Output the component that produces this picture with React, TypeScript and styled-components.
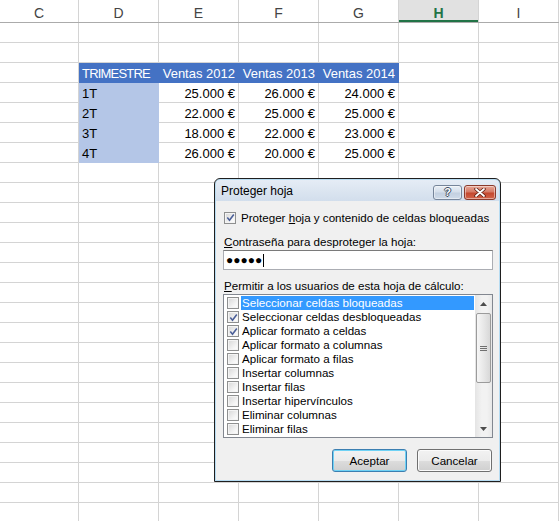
import styled, { createGlobalStyle } from 'styled-components';

const GlobalStyle = createGlobalStyle`
  html, body {
    margin: 0;
    padding: 0;
    background: #ffffff;
  }
  body {
    width: 559px;
    height: 521px;
    overflow: hidden;
  }
`;

const GRID = '#d4d4d4';
const BLUE = '#4472c4';
const LIGHT_BLUE = '#b4c6e7';

const columns = [
  { name: 'C', w: 79 },
  { name: 'D', w: 80 },
  { name: 'E', w: 80 },
  { name: 'F', w: 80 },
  { name: 'G', w: 80 },
  { name: 'H', w: 80, active: true },
  { name: 'I', w: 80 },
];

const table = [
  ['TRIMESTRE', 'Ventas 2012', 'Ventas 2013', 'Ventas 2014'],
  ['1T', '25.000 €', '26.000 €', '24.000 €'],
  ['2T', '22.000 €', '25.000 €', '25.000 €'],
  ['3T', '18.000 €', '22.000 €', '23.000 €'],
  ['4T', '26.000 €', '20.000 €', '25.000 €'],
];

const TABLE_ROW = 2;
const TABLE_COL = 1;
const ROW_COUNT = 25;

const permissions = [
  { label: 'Seleccionar celdas bloqueadas', checked: false, selected: true },
  { label: 'Seleccionar celdas desbloqueadas', checked: true },
  { label: 'Aplicar formato a celdas', checked: true },
  { label: 'Aplicar formato a columnas', checked: false },
  { label: 'Aplicar formato a filas', checked: false },
  { label: 'Insertar columnas', checked: false },
  { label: 'Insertar filas', checked: false },
  { label: 'Insertar hipervínculos', checked: false },
  { label: 'Eliminar columnas', checked: false },
  { label: 'Eliminar filas', checked: false },
];

/* ---------- sheet ---------- */

const Sheet = styled.div`
  position: relative;
  width: 559px;
  height: 521px;
  overflow: hidden;
  background: #ffffff;
  font-family: 'Liberation Sans', Arial, sans-serif;
`;

const HeaderRow = styled.div`
  display: flex;
  height: 23px;
  box-sizing: border-box;
  border-bottom: 1px solid #ababab;
`;

const ColHeader = styled.div<{ $w: number; $active?: boolean }>`
  flex: 0 0 ${({ $w }) => $w}px;
  box-sizing: border-box;
  display: flex;
  align-items: center;
  justify-content: center;
  padding-top: 3px;
  border-right: 1px solid ${GRID};
  font-size: 14px;
  color: ${({ $active }) => ($active ? '#217346' : '#444444')};
  font-weight: ${({ $active }) => ($active ? 700 : 400)};
  background: ${({ $active }) => ($active ? '#e1e1e1' : '#ffffff')};
  box-shadow: ${({ $active }) => ($active ? 'inset 0 -2px 0 #217346' : 'none')};
`;

const GridRow = styled.div`
  display: flex;
  height: 20px;
`;

const Cell = styled.div<{
  $w: number;
  $fill?: string;
  $right?: boolean;
  $light?: boolean;
  $caps?: boolean;
}>`
  flex: 0 0 ${({ $w }) => $w}px;
  box-sizing: border-box;
  display: flex;
  align-items: flex-end;
  justify-content: ${({ $right }) => ($right ? 'flex-end' : 'flex-start')};
  padding: 0 3px 1px 3px;
  border-right: 1px solid ${({ $fill }) => $fill ?? GRID};
  border-bottom: 1px solid ${({ $fill }) => $fill ?? GRID};
  background: ${({ $fill }) => $fill ?? '#ffffff'};
  color: ${({ $light }) => ($light ? '#ffffff' : '#000000')};
  font-size: 13px;
  line-height: 15px;
  letter-spacing: ${({ $caps }) => ($caps ? '-0.8px' : 'normal')};
  white-space: nowrap;
`;

/* ---------- dialog ---------- */

const Dialog = styled.div`
  position: absolute;
  left: 214px;
  top: 178px;
  width: 287px;
  height: 304px;
  box-sizing: border-box;
  display: flex;
  flex-direction: column;
  border: 1px solid #1f1f1f;
  border-radius: 6px 6px 0 0;
  background: linear-gradient(#e6edf6, #d2deec 22px, #c9dbec);
  box-shadow: inset 0 0 0 1px #b7dcf2;
  font-family: 'Liberation Sans', Arial, sans-serif;
  font-size: 11.6px;
  color: #000000;
`;

const TitleBar = styled.div`
  height: 22px;
  display: flex;
  align-items: center;
  padding: 0 4px 0 6px;
`;

const Title = styled.span`
  flex: 1;
  font-size: 12px;
  padding-top: 2px;
`;

const CaptionButtons = styled.div`
  display: flex;
  gap: 2px;
  align-self: flex-end;
  margin-bottom: 1px;
`;

const CaptionButton = styled.div<{ $close?: boolean }>`
  width: ${({ $close }) => ($close ? 32 : 29)}px;
  height: 15px;
  box-sizing: border-box;
  display: flex;
  align-items: center;
  justify-content: center;
  border: 1px solid ${({ $close }) => ($close ? '#8a3a2c' : '#76859a')};
  border-radius: 3px;
  background: ${({ $close }) =>
    $close
      ? 'linear-gradient(#e7a797, #d57a66 45%, #c4482f 55%, #d2644b)'
      : 'linear-gradient(#e9eff6, #d5dfeb 45%, #c3d0e0 55%, #cfdbe9)'};
  box-shadow: inset 0 0 0 1px rgba(255, 255, 255, 0.45);
`;

const HelpGlyph = styled.span`
  font-size: 11px;
  font-weight: 700;
  line-height: 11px;
  color: #ffffff;
  text-shadow: 1px 0 0 #3d4b5f, -1px 0 0 #3d4b5f, 0 1px 0 #3d4b5f, 0 -1px 0 #3d4b5f;
`;

const Body = styled.div`
  flex: 1;
  margin: 0 1px 1px;
  background: #f0f0f0;
  padding: 0 6px 0 7px;
  display: flex;
  flex-direction: column;
`;

const CheckRow = styled.div`
  margin-top: 9px;
  height: 15px;
  display: flex;
  align-items: center;
  padding-left: 1px;
  gap: 5px;
  white-space: nowrap;
`;

const Label = styled.div<{ $gap: number }>`
  margin-top: ${({ $gap }) => $gap}px;
  height: 15px;
  line-height: 15px;
  padding-left: 1px;
  white-space: nowrap;
`;

const Key = styled.span`
  text-decoration: underline;
`;

const PasswordInput = styled.div`
  margin-top: 1px;
  height: 20px;
  box-sizing: border-box;
  display: flex;
  align-items: center;
  padding-left: 2px;
  border: 1px solid #abadb3;
  border-top-color: #7a7a7a;
  background: #ffffff;
`;

const Dots = styled.span`
  font-family: 'Liberation Sans', 'DejaVu Sans', sans-serif;
  font-size: 12px;
  line-height: 14px;
`;

const Caret = styled.span`
  width: 1px;
  height: 13px;
  margin-left: 1px;
  background: #000000;
`;

const ListBox = styled.div`
  margin-top: 1px;
  height: 144px;
  box-sizing: border-box;
  display: flex;
  border: 1px solid #828790;
  background: #ffffff;
`;

const Items = styled.div`
  flex: 1;
  display: flex;
  flex-direction: column;
  padding: 1px 1px 1px 3px;
`;

const Item = styled.div`
  height: 14px;
  display: flex;
  align-items: center;
  white-space: nowrap;
`;

const ItemLabel = styled.span<{ $selected?: boolean }>`
  flex: 1;
  height: 14px;
  line-height: 14px;
  margin-left: 2px;
  padding-left: 1px;
  background: ${({ $selected }) => ($selected ? '#3399ff' : 'transparent')};
  color: ${({ $selected }) => ($selected ? '#ffffff' : '#000000')};
`;

const Box = styled.span`
  flex: 0 0 12px;
  width: 12px;
  height: 12px;
  box-sizing: border-box;
  display: flex;
  align-items: center;
  justify-content: center;
  border: 1px solid #8e8f8f;
  background: linear-gradient(135deg, #d6d6d6, #f6f6f6 70%, #ffffff);
  box-shadow: inset 0 0 0 1px #f4f4f4;
`;

const ScrollBar = styled.div`
  width: 17px;
  display: flex;
  flex-direction: column;
  background: linear-gradient(90deg, #e4e4e4, #f2f2f2 40%, #f2f2f2 70%, #e8e8e8);
`;

const ScrollArrow = styled.div`
  height: 17px;
  display: flex;
  align-items: center;
  justify-content: center;
`;

const ScrollTrack = styled.div`
  flex: 1;
  padding-top: 1px;
`;

const Thumb = styled.div`
  height: 70px;
  margin: 0 1px;
  box-sizing: border-box;
  display: flex;
  flex-direction: column;
  align-items: center;
  justify-content: center;
  gap: 1px;
  border: 1px solid #9b9b9b;
  border-radius: 2px;
  background: linear-gradient(90deg, #f6f6f6, #e8e8e8 50%, #d8d8d8);
`;

const Grip = styled.span`
  width: 7px;
  height: 1px;
  background: #707070;
`;

const ButtonRow = styled.div`
  margin-top: 11px;
  display: flex;
  justify-content: flex-end;
  gap: 10px;
  padding-right: 1px;
`;

const Button = styled.button<{ $default?: boolean }>`
  width: 75px;
  height: 23px;
  box-sizing: border-box;
  padding: 0;
  border: 1px solid ${({ $default }) => ($default ? '#3c7fb1' : '#707070')};
  border-radius: 3px;
  background: linear-gradient(#f2f2f2, #ebebeb 50%, #dddddd 51%, #cfcfcf);
  box-shadow: inset 0 0 0 1px ${({ $default }) => ($default ? '#6fd2f5' : '#fbfbfb')};
  font-family: inherit;
  font-size: 11.6px;
  color: #000000;
`;

function CheckBox({ checked }: { checked: boolean }) {
  return (
    <Box>
      {checked && (
        <svg width="9" height="9" viewBox="0 0 9 9">
          <path d="M1.3 4.6 L3.5 7.2 L7.8 1.4" fill="none" stroke="#4b5f98" strokeWidth="1.6" />
        </svg>
      )}
    </Box>
  );
}

function CloseIcon() {
  return (
    <svg width="12" height="9" viewBox="0 0 12 9">
      <path d="M2 1 L10 8 M10 1 L2 8" stroke="#5c1d12" strokeWidth="3.4" strokeLinecap="round" />
      <path d="M2 1 L10 8 M10 1 L2 8" stroke="#ffffff" strokeWidth="1.8" strokeLinecap="round" />
    </svg>
  );
}

export default function App() {
  const rows = Array.from({ length: ROW_COUNT }, (_, r) => r);

  return (
    <>
      <GlobalStyle />
      <Sheet>
        <HeaderRow>
          {columns.map((col) => (
            <ColHeader key={col.name} $w={col.w} $active={col.active}>
              {col.name}
            </ColHeader>
          ))}
        </HeaderRow>

        {rows.map((r) => (
          <GridRow key={r}>
            {columns.map((col, c) => {
              const tr = r - TABLE_ROW;
              const tc = c - TABLE_COL;
              const inTable = tr >= 0 && tr < table.length && tc >= 0 && tc < 4;
              if (!inTable) return <Cell key={col.name} $w={col.w} />;
              const header = tr === 0;
              const fill = header ? BLUE : tc === 0 ? LIGHT_BLUE : undefined;
              return (
                <Cell
                  key={col.name}
                  $w={col.w}
                  $fill={fill}
                  $right={tc > 0}
                  $light={header}
                  $caps={header && tc === 0}
                >
                  {table[tr][tc]}
                </Cell>
              );
            })}
          </GridRow>
        ))}

        <Dialog>
          <TitleBar>
            <Title>Proteger hoja</Title>
            <CaptionButtons>
              <CaptionButton>
                <HelpGlyph>?</HelpGlyph>
              </CaptionButton>
              <CaptionButton $close>
                <CloseIcon />
              </CaptionButton>
            </CaptionButtons>
          </TitleBar>

          <Body>
            <CheckRow>
              <CheckBox checked />
              <span>
                Proteger <Key>h</Key>oja y contenido de celdas bloqueadas
              </span>
            </CheckRow>

            <Label $gap={9}>
              <Key>C</Key>ontraseña para desproteger la hoja:
            </Label>
            <PasswordInput>
              <Dots>●●●●●</Dots>
              <Caret />
            </PasswordInput>

            <Label $gap={8}>
              <Key>P</Key>ermitir a los usuarios de esta hoja de cálculo:
            </Label>
            <ListBox>
              <Items>
                {permissions.map((p) => (
                  <Item key={p.label}>
                    <CheckBox checked={p.checked} />
                    <ItemLabel $selected={p.selected}>{p.label}</ItemLabel>
                  </Item>
                ))}
              </Items>
              <ScrollBar>
                <ScrollArrow>
                  <svg width="7" height="4" viewBox="0 0 7 4">
                    <polygon points="0,4 7,4 3.5,0" fill="#4d4d4d" />
                  </svg>
                </ScrollArrow>
                <ScrollTrack>
                  <Thumb>
                    <Grip />
                    <Grip />
                    <Grip />
                  </Thumb>
                </ScrollTrack>
                <ScrollArrow>
                  <svg width="7" height="4" viewBox="0 0 7 4">
                    <polygon points="0,0 7,0 3.5,4" fill="#4d4d4d" />
                  </svg>
                </ScrollArrow>
              </ScrollBar>
            </ListBox>

            <ButtonRow>
              <Button $default>Aceptar</Button>
              <Button>Cancelar</Button>
            </ButtonRow>
          </Body>
        </Dialog>
      </Sheet>
    </>
  );
}
